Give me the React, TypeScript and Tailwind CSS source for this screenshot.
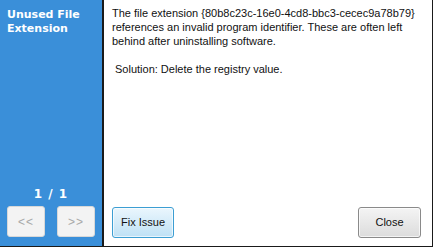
import React from "react";

const TITLE_FONT = { fontFamily: "Tahoma, 'DejaVu Sans', Verdana, sans-serif" };
const BODY_FONT = { fontFamily: "Tahoma, 'Liberation Sans', Arial, sans-serif" };

function NavButton({ label }: { label: string }) {
  return (
    <button className="w-[38px] h-[31px] rounded-[3px] bg-[#f3f3f3] border border-[#d8d8d8] text-[12px] tracking-[1px] text-[#a8a8a8] flex items-center justify-center" style={BODY_FONT}>
      {label}
    </button>
  );
}

export default function App() {
  return (
    <div className="w-[434px] h-[248px] bg-white flex text-[11px]" style={BODY_FONT}>
      {/* left blue panel */}
      <div className="w-[104px] h-[247px] bg-[#3a8fd9] border-r-2 border-b border-[#1a1a1a] flex flex-col justify-between px-[7px] pt-[8px] pb-[9px]">
        <h1 className="text-white font-bold text-[11px] leading-[14px]" style={TITLE_FONT}>Unused File Extension</h1>
        <div className="flex flex-col gap-[3px]">
          <p className="text-white font-bold text-[12px] text-center tracking-[1px]" style={TITLE_FONT}>1 / 1</p>
          <div className="flex justify-between">
            <NavButton label="<<" />
            <NavButton label=">>" />
          </div>
        </div>
      </div>

      {/* message area */}
      <div className="w-[329px] h-[247px] border-r border-b border-[#1a1a1a] flex flex-col justify-between pl-[8px] pr-[11px] pt-[6px] pb-[8px]">
        <div className="text-[#111] leading-[14px] text-[11px]">
          <p>
            The file extension {"{80b8c23c-16e0-4cd8-bbc3-cecec9a78b79}"} references an invalid program identifier. These are often left behind after uninstalling software.
          </p>
          <p className="mt-[14px] pl-[3px]">Solution: Delete the registry value.</p>
        </div>
        <div className="flex justify-between items-end">
          <button className="w-[62px] h-[31px] rounded-[3px] border border-[#3c9ed3] bg-gradient-to-b from-[#eaf6fd] to-[#bfe1f5] text-[11px] text-[#111] shadow-[inset_0_0_0_1px_#ffffffaa]">
            Fix Issue
          </button>
          <button className="w-[63px] h-[31px] rounded-[3px] border border-[#8a8a8a] bg-gradient-to-b from-[#f4f4f4] to-[#dcdcdc] text-[11px] text-[#111] shadow-[inset_0_0_0_1px_#ffffffaa]">
            Close
          </button>
        </div>
      </div>
    </div>
  );
}
